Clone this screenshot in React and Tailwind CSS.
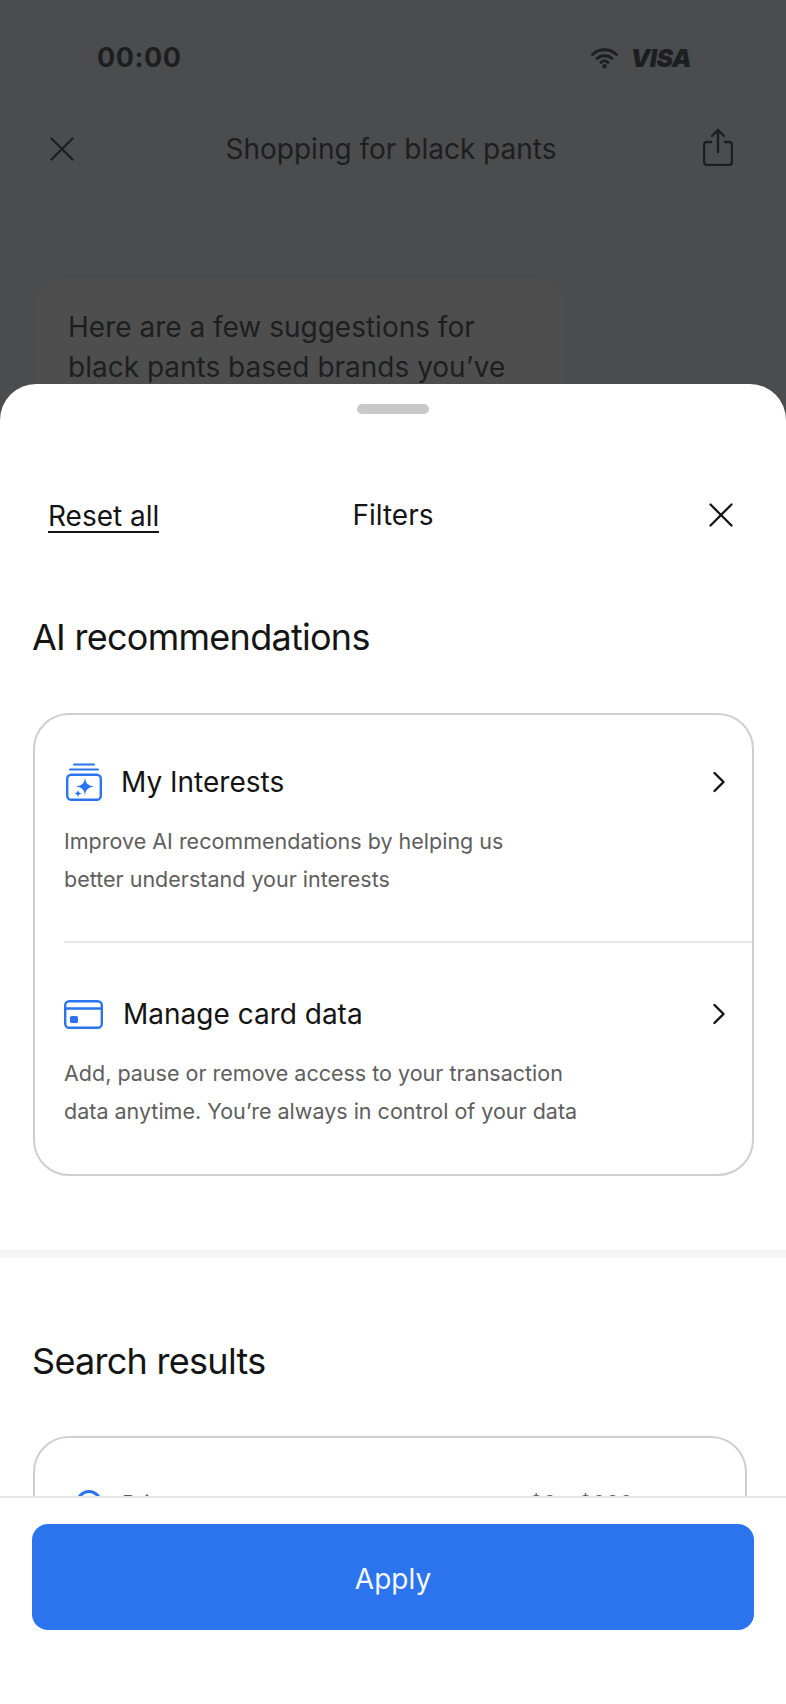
import React from 'react';
import { ChevronRight, X } from 'lucide-react';

const font = { fontFamily: 'Inter, sans-serif' };

function WifiIcon() {
  return (
    <svg width="29" height="22" viewBox="0 0 28 22" fill="none" stroke="#1d1e1f" strokeWidth="3" strokeLinecap="round">
      <path d="M2 7.5C8.6 1.2 19.4 1.2 26 7.5" />
      <path d="M6.5 11.5C10.6 7.8 17.4 7.8 21.5 11.5" />
      <path d="M10.5 15.3C12.5 13.6 15.5 13.6 17.5 15.3" />
      <circle cx="14" cy="19.3" r="2.2" fill="#1d1e1f" stroke="none" />
    </svg>
  );
}

function ShareIcon() {
  return (
    <svg width="30" height="38" viewBox="0 0 30 38" fill="none" stroke="#1d1e1f" strokeWidth="2.4" strokeLinecap="round" strokeLinejoin="round" className="-mt-[5px]">
      <path d="M15 24V2M9 8l6-6 6 6" />
      <path d="M8 14H4a3 3 0 0 0-3 3v17a3 3 0 0 0 3 3h22a3 3 0 0 0 3-3V17a3 3 0 0 0-3-3h-4" />
    </svg>
  );
}

function InterestsIcon() {
  return (
    <svg width="36" height="38" viewBox="0 0 36 38" fill="none" className="ml-[2px] shrink-0">
      <path d="M8 1.5H28M4 6.5H32" stroke="#2b74ee" strokeWidth="2" strokeLinecap="round" />
      <rect x="1.2" y="11.7" width="33.6" height="25" rx="4" stroke="#2b74ee" strokeWidth="2.4" />
      <path d="M19 14.5C19.6 20 21.5 22.4 28 23.5C21.5 24.6 19.6 27 19 32.5C18.4 27 16.5 24.6 10 23.5C16.5 22.4 18.4 20 19 14.5Z" fill="#2b74ee" />
      <path d="M12 26.5C12.2 29 13 30 15.8 30.5C13 31 12.2 32 12 34.5C11.8 32 11 31 8.2 30.5C11 30 11.8 29 12 26.5Z" fill="#2b74ee" />
    </svg>
  );
}

function CardIcon() {
  return (
    <svg width="39" height="29" viewBox="0 0 39 29" fill="none" className="shrink-0">
      <rect x="1.2" y="1.2" width="36.6" height="26.6" rx="4" stroke="#2b74ee" strokeWidth="2.4" />
      <path d="M1 8.5H38" stroke="#2b74ee" strokeWidth="2.4" />
      <rect x="6" y="16" width="8" height="7" rx="1.5" fill="#2b74ee" />
    </svg>
  );
}

function CardRow({ icon, title, gap, children }) {
  return (
    <div>
      <div className="flex h-10 items-center justify-between pr-[15px]">
        <div className={`flex items-center ${gap}`}>
          {icon}
          <span className="text-[28px] leading-10 text-[#141414]">{title}</span>
        </div>
        <ChevronRight size={36} strokeWidth={1.6} className="text-[#141414]" />
      </div>
      <p className="mt-[20px] text-[21.5px] leading-[38px] text-[#5e5e5e]">{children}</p>
    </div>
  );
}

export default function App() {
  return (
    <div style={font} className="relative h-[1704px] w-[786px] overflow-hidden bg-[#4b4c4e] text-[#1d1e1f]">
      {/* pagina de fondo, oscurecida */}
      <div className="mt-[34px] flex h-[48px] items-center justify-between pl-[97px] pr-[95px]">
        <span className="text-[27px] font-bold leading-9 tracking-[0.02em]">00:00</span>
        <div className="flex items-center gap-[12px]">
          <WifiIcon />
          <span className="text-[25px] font-black italic leading-none tracking-tight">VISA</span>
        </div>
      </div>
      <div className="mt-[45px] flex h-[44px] items-center justify-between pl-[41px] pr-[53px]">
        <X size={42} strokeWidth={1.3} />
        <span className="-ml-[4px] text-[28px] leading-10">Shopping for black pants</span>
        <ShareIcon />
      </div>
      <div className="ml-[35px] mt-[108px] h-[300px] w-[530px] rounded-[28px] bg-[#4e4e4e] px-[33px] py-[28px] text-[28px] leading-10">
        Here are a few suggestions for
        <br />
        black pants based brands you’ve
      </div>

      {/* sheet de filtros */}
      <div className="absolute inset-x-0 bottom-0 top-[384px] flex flex-col rounded-t-[36px] bg-white">
        <div className="relative min-h-0 flex-1 overflow-hidden">
          <div className="mx-auto mt-[20px] h-[10px] w-[72px] rounded-full bg-[#c9c9c9]" />
          <div className="mt-[81px] flex h-[40px] items-center justify-between pl-[48px] pr-[44px] text-[28px] text-[#141414]">
            <span className="border-b-2 border-[#141414] pt-[4px] leading-[30px]">Reset all</span>
            <span className="absolute left-0 right-0 text-center leading-10">Filters</span>
            <X size={42} strokeWidth={1.3} />
          </div>
          <h2 className="ml-[32px] mt-[80px] text-[36px] font-normal leading-[44px] tracking-[-0.02em] text-[#141414]">AI recommendations</h2>
          <div className="ml-[33px] mt-[54px] h-[463px] w-[721px] rounded-[36px] border-2 border-[#cfcfcf] pl-[29px] pt-[47px]">
            <CardRow icon={<InterestsIcon />} title="My Interests" gap="gap-[19px]">
              Improve AI recommendations by helping us
              <br />
              better understand your interests
            </CardRow>
            <div className="mb-[51px] mt-[43px] h-[2px] bg-[#e6e6e6]" />
            <CardRow icon={<CardIcon />} title="Manage card data" gap="gap-[20px]">
              Add, pause or remove access to your transaction
              <br />
              data anytime. You’re always in control of your data
            </CardRow>
          </div>
          <div className="mt-[74px] h-[8px] bg-[#f5f5f5]" />
          <h2 className="ml-[32px] mt-[81px] text-[36px] font-normal leading-[44px] tracking-[-0.02em] text-[#141414]">Search results</h2>
          <div className="ml-[33px] mt-[53px] h-[200px] w-[714px] rounded-[36px] border-2 border-[#cfcfcf] pl-[41px] pr-[112px] pt-[51px]">
            <div className="flex items-center justify-between text-[21.5px] leading-[28px] text-[#5e5e5e]">
              <div className="flex items-center gap-[20px]">
                <span className="h-[26px] w-[26px] rounded-full border-[3px] border-[#2b74ee]" />
                <span>Price</span>
              </div>
              <span>$0 - $000</span>
            </div>
          </div>
        </div>
        <div className="h-[208px] shrink-0 border-t-2 border-[#e6e6e6] bg-white px-[32px] pt-[26px]">
          <button className="flex h-[106px] w-full items-center justify-center rounded-[16px] bg-[#2b74ee] pt-[3px] text-[28px] text-[#f5f8ff]">
            Apply
          </button>
        </div>
      </div>
    </div>
  );
}
